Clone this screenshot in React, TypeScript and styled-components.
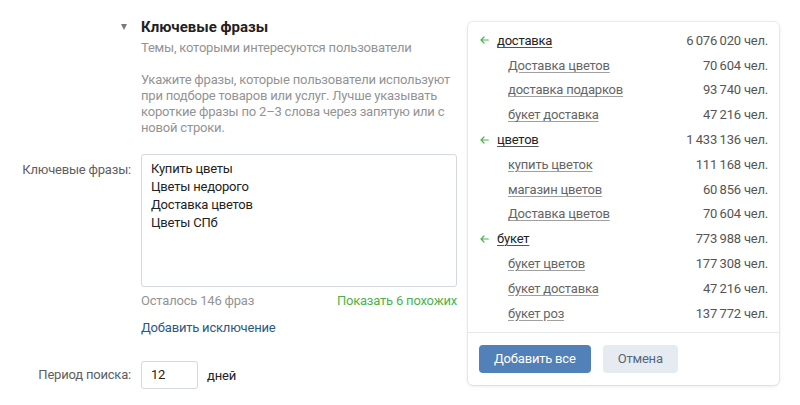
import React from "react";
import styled, { createGlobalStyle } from "styled-components";

const Global = createGlobalStyle`
  html, body { margin: 0; padding: 0; background: #fff; }
  body {
    font-family: Roboto, "Noto Sans", Arial, sans-serif;
    letter-spacing: -0.2px;
    -webkit-font-smoothing: antialiased;
  }
`;

const Page = styled.div`
  display: flex;
  align-items: flex-start;
  width: 800px;
  height: 405px;
  overflow: hidden;
`;

const Form = styled.div`
  display: grid;
  grid-template-columns: 131px 316px;
  column-gap: 10px;
  padding-top: 17px;
  width: 457px;
`;

const LabelCell = styled.div<{ $pt?: number; $lh?: number }>`
  text-align: right;
  font-size: 13px;
  line-height: ${(p) => p.$lh ?? 18}px;
  color: #5e5e5e;
  padding-top: ${(p) => p.$pt ?? 0}px;
`;

const Triangle = styled.span`
  display: inline-block;
  margin-right: 4px;
  margin-top: 7px;
  width: 0;
  height: 0;
  border-left: 3.5px solid transparent;
  border-right: 3.5px solid transparent;
  border-top: 6px solid #7a7a7a;
`;

const Title = styled.div`
  font-size: 15px;
  line-height: 20px;
  font-weight: 700;
  letter-spacing: 0;
  color: #222;
`;

const Subtitle = styled.div`
  font-size: 13px;
  line-height: 19px;
  color: #939393;
  margin-top: 1px;
`;

const Hint = styled.div`
  font-size: 13px;
  line-height: 16px;
  color: #939393;
  margin-top: 15px;
  margin-bottom: 18px;
`;

const Area = styled.div`
  box-sizing: border-box;
  height: 133px;
  border: 1px solid #d3d9de;
  border-radius: 3px;
  padding: 5px 9px;
  font-size: 13px;
  line-height: 18px;
  color: #222;
`;

const Meta = styled.div`
  display: flex;
  justify-content: space-between;
  font-size: 13px;
  line-height: 18px;
  margin-top: 5px;
`;

const Muted = styled.span`
  color: #939393;
`;

const Green = styled.span`
  color: #4bb34b;
`;

const BlueLink = styled.div`
  font-size: 13px;
  line-height: 18px;
  color: #2a5885;
  margin-top: 9px;
`;

const PeriodRow = styled.div`
  display: flex;
  align-items: center;
  gap: 9px;
  padding-top: 24px;
  font-size: 13px;
  color: #222;
`;

const SmallInput = styled.div`
  box-sizing: border-box;
  width: 57px;
  height: 28px;
  border: 1px solid #d3d9de;
  border-radius: 3px;
  padding: 0 9px;
  line-height: 26px;
  font-size: 13px;
  color: #222;
`;

const Card = styled.div`
  margin-left: 11px;
  margin-top: 22px;
  width: 311px;
  box-sizing: border-box;
  background: #fff;
  border-radius: 5px;
  box-shadow: 0 0 0 1px rgba(0, 0, 0, 0.06), 0 1px 4px rgba(0, 0, 0, 0.1);
`;

const List = styled.div`
  padding: 6px 11px 6px 12px;
`;

const Row = styled.div`
  display: flex;
  align-items: center;
  height: 24.8px;
  font-size: 13px;
`;

const ArrowBox = styled.span`
  display: flex;
  align-items: center;
  width: 17px;
`;

const Phrase = styled.span<{ $sub?: boolean }>`
  margin-left: ${(p) => (p.$sub ? 28 : 0)}px;
  color: ${(p) => (p.$sub ? "#656565" : "#222")};
  text-decoration: underline;
  text-decoration-color: ${(p) => (p.$sub ? "#a0a0a0" : "#555")};
  text-underline-offset: 2px;
`;

const Count = styled.span`
  margin-left: auto;
  color: #555;
`;

const Footer = styled.div`
  display: flex;
  gap: 12px;
  padding: 12px 11px;
  border-top: 1px solid #e7e8ec;
`;

const Button = styled.button<{ $primary?: boolean }>`
  height: 28px;
  border: none;
  border-radius: 4px;
  padding: 0 15px;
  font-family: inherit;
  letter-spacing: inherit;
  font-size: 13px;
  background: ${(p) => (p.$primary ? "#5181b8" : "#e5ebf1")};
  color: ${(p) => (p.$primary ? "#fff" : "#55677d")};
`;

const Arrow = () => (
  <ArrowBox>
    <svg width="9" height="8" viewBox="0 0 9 8" fill="none" stroke="#4bb34b" strokeWidth="1.2" strokeLinecap="round" strokeLinejoin="round">
      <path d="M8.3 4H1M4 1L1 4l3 3" />
    </svg>
  </ArrowBox>
);

const ts = "\u2009";
const rows: { text: string; count: string; main?: boolean }[] = [
  { text: "доставка", count: `6${ts}076${ts}020 чел.`, main: true },
  { text: "Доставка цветов", count: `70${ts}604 чел.` },
  { text: "доставка подарков", count: `93${ts}740 чел.` },
  { text: "букет доставка", count: `47${ts}216 чел.` },
  { text: "цветов", count: `1${ts}433${ts}136 чел.`, main: true },
  { text: "купить цветок", count: `111${ts}168 чел.` },
  { text: "магазин цветов", count: `60${ts}856 чел.` },
  { text: "Доставка цветов", count: `70${ts}604 чел.` },
  { text: "букет", count: `773${ts}988 чел.`, main: true },
  { text: "букет цветов", count: `177${ts}308 чел.` },
  { text: "букет доставка", count: `47${ts}216 чел.` },
  { text: "букет роз", count: `137${ts}772 чел.` },
];

export default function App() {
  return (
    <>
      <Global />
      <Page>
        <Form>
          <LabelCell>
            <Triangle />
          </LabelCell>
          <div>
            <Title>Ключевые фразы</Title>
            <Subtitle>Темы, которыми интересуются пользователи</Subtitle>
            <Hint>
              Укажите фразы, которые пользователи используют при подборе товаров или услуг. Лучше указывать
              короткие фразы по 2–3 слова через запятую или с новой строки.
            </Hint>
          </div>
          <LabelCell $pt={7}>Ключевые фразы:</LabelCell>
          <div>
            <Area>
              Купить цветы
              <br />
              Цветы недорого
              <br />
              Доставка цветов
              <br />
              Цветы СПб
            </Area>
            <Meta>
              <Muted>Осталось 146 фраз</Muted>
              <Green>Показать 6 похожих</Green>
            </Meta>
            <BlueLink>Добавить исключение</BlueLink>
          </div>
          <LabelCell $pt={24} $lh={28}>
            Период поиска:
          </LabelCell>
          <PeriodRow>
            <SmallInput>12</SmallInput>
            <span>дней</span>
          </PeriodRow>
        </Form>
        <Card>
          <List>
            {rows.map((r, i) => (
              <Row key={i}>
                {r.main && <Arrow />}
                <Phrase $sub={!r.main}>{r.text}</Phrase>
                <Count>{r.count}</Count>
              </Row>
            ))}
          </List>
          <Footer>
            <Button $primary>Добавить все</Button>
            <Button>Отмена</Button>
          </Footer>
        </Card>
      </Page>
    </>
  );
}
